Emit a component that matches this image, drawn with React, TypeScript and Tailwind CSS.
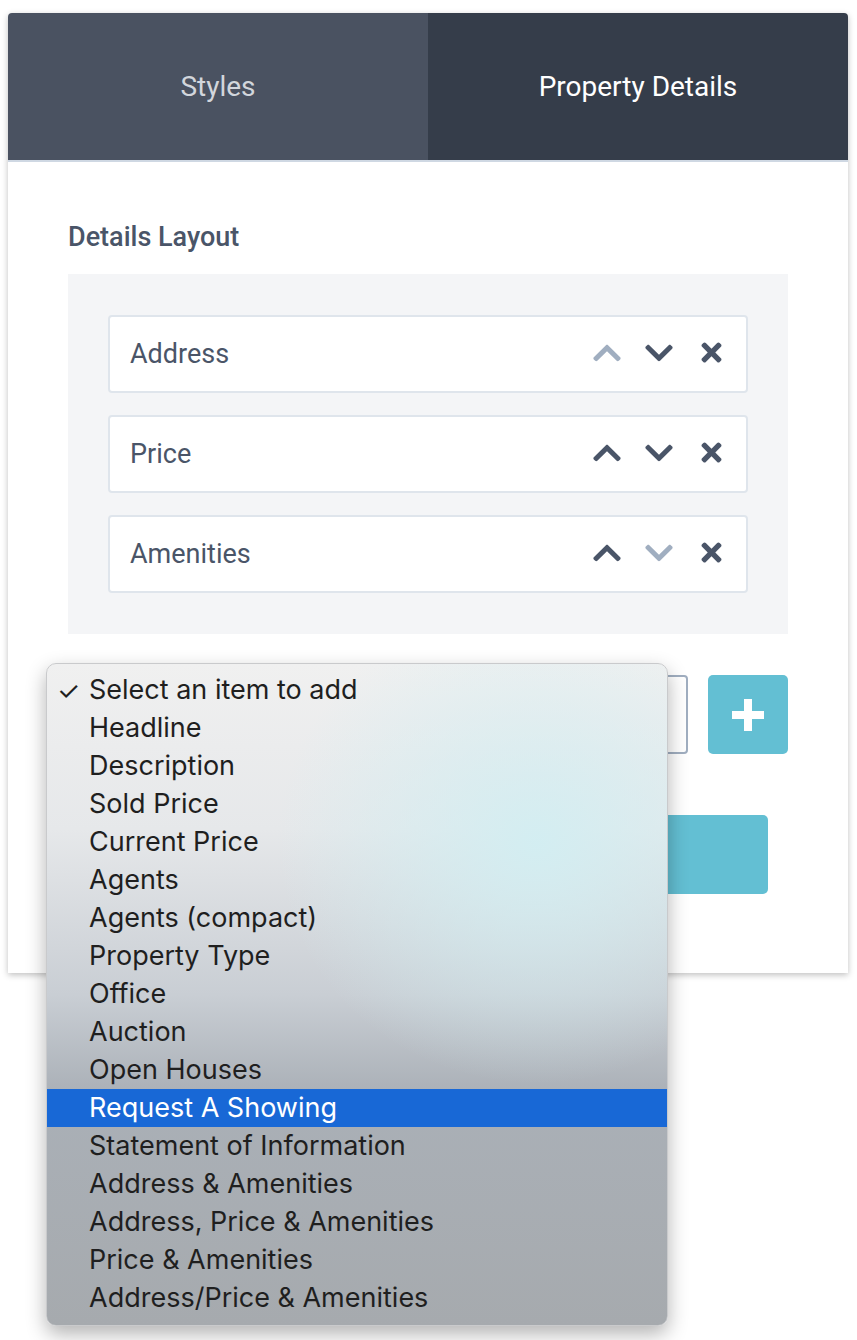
import { FaChevronUp, FaChevronDown, FaTimes } from 'react-icons/fa'

type Row = { label: string; canUp: boolean; canDown: boolean }

const rows: Row[] = [
  { label: 'Address', canUp: false, canDown: true },
  { label: 'Price', canUp: true, canDown: true },
  { label: 'Amenities', canUp: true, canDown: false },
]

const options = [
  'Select an item to add',
  'Headline',
  'Description',
  'Sold Price',
  'Current Price',
  'Agents',
  'Agents (compact)',
  'Property Type',
  'Office',
  'Auction',
  'Open Houses',
  'Request A Showing',
  'Statement of Information',
  'Address & Amenities',
  'Address, Price & Amenities',
  'Price & Amenities',
  'Address/Price & Amenities',
]

function PlusIcon() {
  return (
    <svg width="32" height="32" viewBox="0 0 32 32" fill="#ffffff">
      <rect x="12" y="0" width="8" height="32" />
      <rect x="0" y="12" width="32" height="8" />
    </svg>
  )
}

export default function App() {
  return (
    <div className="relative w-[857px] h-[1340px] bg-white px-[8px] pt-[13px] font-['Roboto',sans-serif]">
      {/* Panel */}
      <div className="w-[840px] h-[960px] bg-white rounded-t-[4px] overflow-hidden shadow-[0_2px_6px_rgba(0,0,0,0.25)]">
        <div className="flex h-[149px] border-b-2 border-[#cfd8e3]">
          <div className="w-[420px] bg-[#4a5261] flex items-center justify-center text-[28px] text-[#d2d6dc]">
            Styles
          </div>
          <div className="flex-1 bg-[#353d4a] flex items-center justify-center text-[28px] text-white">
            Property Details
          </div>
        </div>

        <div className="px-[60px] pt-[60px]">
          <h2 className="text-[27px] leading-[30px] font-medium text-[#4a5568]">Details Layout</h2>

          <div className="mt-[22px] bg-[#f4f5f7] px-[40px] py-[41px] flex flex-col gap-[22px]">
            {rows.map(r => (
              <div
                key={r.label}
                className="h-[78px] bg-white border-2 border-[#dfe5ec] rounded-[4px] pl-[20px] pr-[20px] flex items-center"
              >
                <span className="flex-1 text-[27px] text-[#4a5568]">{r.label}</span>
                <div className="flex items-center -mt-[3px]">
                  <FaChevronUp size={32} color={r.canUp ? '#4a5568' : '#a0aec0'} />
                  <FaChevronDown size={32} color={r.canDown ? '#4a5568' : '#a0aec0'} className="ml-[20px]" />
                  <FaTimes size={29} color="#4a5568" className="ml-[22px]" />
                </div>
              </div>
            ))}
          </div>

          <div className="mt-[41px] flex gap-[20px]">
            <div className="flex-1 h-[79px] border-2 border-[#a0aec0] rounded-[4px] bg-white" />
            <button className="w-[80px] h-[79px] bg-[#63bfd3] rounded-[5px] flex items-center justify-center">
              <PlusIcon />
            </button>
          </div>

          <div className="mt-[61px] mx-[20px] h-[79px] bg-[#63bfd3] rounded-[5px]" />
        </div>
      </div>

      {/* Native select popup (open) */}
      <div className="absolute left-[46px] top-[663px] w-[622px] h-[663px] rounded-[10px] overflow-hidden border border-[#c9cacc] shadow-[0_8px_20px_rgba(0,0,0,0.3)] bg-[linear-gradient(180deg,#f0f0f0_0%,#e6e8ea_25%,#c9ced4_50%,#aab0b7_65%,#a6aaae_100%)]">
        <div className="absolute inset-0 bg-[radial-gradient(ellipse_260px_240px_at_490px_180px,rgba(210,238,242,0.95),rgba(210,238,242,0)_100%)]" />
        <div className="relative pt-[7px] font-['Inter',sans-serif]">
          {options.map((o, i) => {
            const hi = i === 11
            return (
              <div
                key={o}
                className={`h-[38px] flex items-center text-[27px] ${hi ? 'bg-[#1868d6] text-white' : 'text-[#1f1f1f]'}`}
              >
                <span className="w-[42px] pl-[10px] text-[26px]">{i === 0 ? '✓' : ''}</span>
                <span>{o}</span>
              </div>
            )
          })}
        </div>
      </div>
    </div>
  )
}
